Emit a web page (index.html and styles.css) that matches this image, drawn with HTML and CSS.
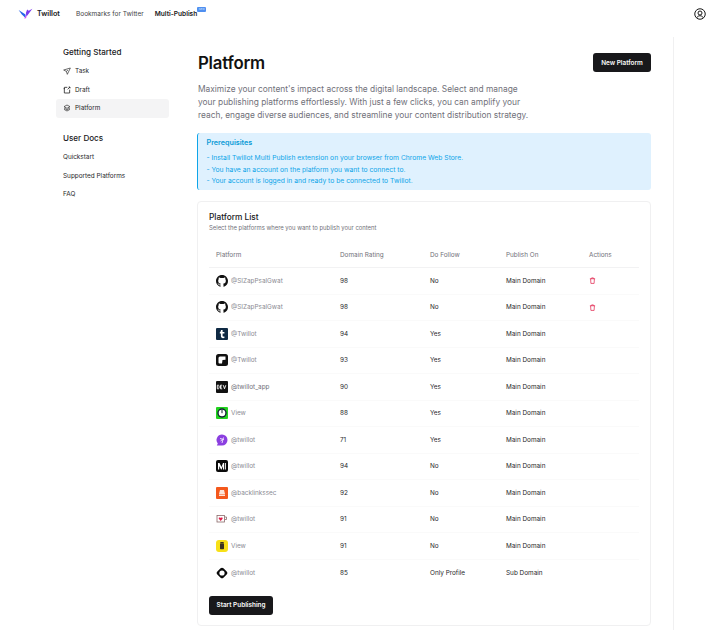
FILE: index.html
```html
<!DOCTYPE html>
<html lang="en">
<head>
<meta charset="utf-8">
<title>Platform</title>
<link rel="stylesheet" href="styles.css">
</head>
<body>
<header class="topbar">
  <div class="brand">
    <svg class="logo" viewBox="0 0 16 12" width="15" height="11"><path fill="#7c3aed" d="M9 9.500 15.500.8 11.500 3 9.800 1.600 8.400 5.400z"/><path fill="#2563eb" d="M8.600 11.500 8 7 .5 2.200 4 7.200z"/><path fill="#d946ef" d="M6.600 11.800 8.600 7.600 8.900 10.500z"/></svg>
    <span class="brand-name">Twillot</span>
  </div>
  <nav class="topnav">
    <a class="topnav-link">Bookmarks for Twitter</a>
    <a class="topnav-link topnav-current">Multi-Publish<span class="new-badge">NEW</span></a>
  </nav>
  <svg class="avatar" viewBox="0 0 24 24" width="12" height="12" fill="none" stroke="#1a1a1a" stroke-width="2"><circle cx="12" cy="12" r="10.500"/><circle cx="12" cy="10" r="4"/><path d="M5.500 19.500c1.500-3 3.800-4 6.500-4s5 1 6.500 4"/></svg>
</header>
<div class="layout">
  <aside class="sidebar">
    <h3 class="side-title">Getting Started</h3>
    <a class="side-link"><svg class="side-icon" viewBox="0 0 24 24" fill="none" stroke="#222" stroke-width="2"><path d="M22 3 2 9l8 4 3 9z"/><path d="m10 13 5-4"/></svg>Task</a>
    <a class="side-link"><svg class="side-icon" viewBox="0 0 24 24" fill="none" stroke="#222" stroke-width="2.400"><path d="M13 4H4v17h16v-10"/><path d="M2 8h4M17 3h4v4M21 3l-7 7"/></svg>Draft</a>
    <a class="side-link side-active"><svg class="side-icon" viewBox="0 0 24 24" fill="none" stroke="#222" stroke-width="2"><path d="m12 3 9 5-9 5-9-5z"/><path d="m3 12 9 5 9-5M3 16l9 5 9-5"/></svg>Platform</a>
    <h3 class="side-title side-title-docs">User Docs</h3>
    <a class="side-link">Quickstart</a>
    <a class="side-link">Supported Platforms</a>
    <a class="side-link">FAQ</a>
  </aside>
  <main class="main">
    <div class="page-head">
      <h1 class="page-title">Platform</h1>
      <button class="btn btn-new">New Platform</button>
    </div>
    <p class="intro">Maximize your content's impact across the digital landscape. Select and manage your publishing platforms effortlessly. With just a few clicks, you can amplify your reach, engage diverse audiences, and streamline your content distribution strategy.</p>
    <section class="notice">
      <h4 class="notice-title">Prerequisites</h4>
      <p class="notice-line">- Install Twillot Multi Publish extension on your browser from Chrome Web Store.</p>
      <p class="notice-line">- You have an account on the platform you want to connect to.</p>
      <p class="notice-line">- Your account is logged in and ready to be connected to Twillot.</p>
    </section>
    <section class="card">
      <h2 class="card-title">Platform List</h2>
      <p class="card-sub">Select the platforms where you want to publish your content</p>
      <table class="table">
        <thead>
          <tr><th class="col-platform">Platform</th><th class="col-rating">Domain Rating</th><th class="col-follow">Do Follow</th><th class="col-publish">Publish On</th><th>Actions</th></tr>
        </thead>
        <tbody>
          <tr>
            <td><span class="cell-platform"><svg class="pf" viewBox="0 0 16 16"><path fill="#111" d="M8 0C3.580 0 0 3.580 0 8c0 3.540 2.290 6.530 5.470 7.590.4.070.55-.17.55-.38 0-.19-.01-.82-.01-1.490-2.010.370-2.530-.49-2.690-.94-.09-.23-.48-.94-.82-1.130-.28-.15-.68-.52-.01-.53.630-.01 1.080.58 1.230.82.720 1.210 1.870.870 2.330.660.070-.52.280-.87.510-1.070-1.780-.2-3.640-.89-3.640-3.950 0-.87.310-1.590.820-2.150-.08-.2-.36-1.020.08-2.120 0 0 .67-.21 2.200.820.640-.18 1.320-.27 2-.27s1.360.09 2 .27c1.530-1.040 2.200-.82 2.200-.82.440 1.100.160 1.920.080 2.120.510.560.820 1.270.820 2.150 0 3.070-1.870 3.750-3.650 3.950.290.250.540.730.540 1.480 0 1.070-.01 1.930-.01 2.200 0 .210.150.460.550.380A8.010 8.010 0 0 0 16 8c0-4.420-3.580-8-8-8z"/></svg><span class="handle">@SIZapPsalGwat</span></span></td>
            <td>98</td><td>No</td><td>Main Domain</td>
            <td><svg class="trash" viewBox="0 0 24 24" fill="none" stroke="#e11d48" stroke-width="2.400"><path d="M3 6h18M9 6V3h6v3M5.500 6l1 16h11l1-16"/></svg></td>
          </tr>
          <tr>
            <td><span class="cell-platform"><svg class="pf" viewBox="0 0 16 16"><path fill="#111" d="M8 0C3.580 0 0 3.580 0 8c0 3.540 2.290 6.530 5.470 7.590.4.070.55-.17.55-.38 0-.19-.01-.82-.01-1.490-2.010.370-2.530-.49-2.690-.94-.09-.23-.48-.94-.82-1.130-.28-.15-.68-.52-.01-.53.630-.01 1.080.58 1.230.82.720 1.210 1.870.870 2.330.660.070-.52.280-.87.510-1.070-1.780-.2-3.640-.89-3.640-3.950 0-.87.310-1.590.820-2.150-.08-.2-.36-1.020.08-2.120 0 0 .67-.21 2.200.820.640-.18 1.320-.27 2-.27s1.360.09 2 .27c1.530-1.040 2.200-.82 2.200-.82.440 1.100.160 1.920.080 2.120.510.560.820 1.270.820 2.150 0 3.070-1.870 3.750-3.650 3.950.290.250.540.730.540 1.480 0 1.070-.01 1.930-.01 2.200 0 .210.150.460.550.380A8.010 8.010 0 0 0 16 8c0-4.420-3.580-8-8-8z"/></svg><span class="handle">@SIZapPsalGwat</span></span></td>
            <td>98</td><td>No</td><td>Main Domain</td>
            <td><svg class="trash" viewBox="0 0 24 24" fill="none" stroke="#e11d48" stroke-width="2.400"><path d="M3 6h18M9 6V3h6v3M5.500 6l1 16h11l1-16"/></svg></td>
          </tr>
          <tr>
            <td><span class="cell-platform"><svg class="pf" viewBox="0 0 12 12"><rect width="12" height="12" rx="1" fill="#0f2a44"/><path fill="#fff" d="M5 2h1.600v2H8.400v1.500H6.600v2.300c0 .6.400.8 1.800.6V10c-2.200.4-3.500-.1-3.500-1.900V5.500H3.800V4.300C4.500 4 4.900 3 5 2z"/></svg><span class="handle">@Twillot</span></span></td>
            <td>94</td><td>Yes</td><td>Main Domain</td><td></td>
          </tr>
          <tr>
            <td><span class="cell-platform"><svg class="pf" viewBox="0 0 12 12"><rect width="12" height="12" rx="2.500" fill="#111"/><path fill="#fff" d="M4 2.500h5.500v3.200L6.500 6 6 9.500H3.500a1 1 0 0 1-1-1V4A1.500 1.500 0 0 1 4 2.500z"/></svg><span class="handle">@Twillot</span></span></td>
            <td>93</td><td>Yes</td><td>Main Domain</td><td></td>
          </tr>
          <tr>
            <td><span class="cell-platform"><svg class="pf" viewBox="0 0 12 12"><rect width="12" height="12" rx="1" fill="#111"/><path fill="none" stroke="#fff" stroke-width=".9" d="M1.300 4.200v3.600h.8c.8 0 1-.4 1-1.800s-.2-1.800-1-1.800zM6.200 4.200H4.500v3.600h1.700M4.500 6h1.400M7.300 4.200l1.200 3.600 1.300-3.600"/></svg><span class="handle handle-dark">@twillot_app</span></span></td>
            <td>90</td><td>Yes</td><td>Main Domain</td><td></td>
          </tr>
          <tr>
            <td><span class="cell-platform"><svg class="pf" viewBox="0 0 12 12"><rect width="12" height="12" rx="1" fill="#22d31e"/><circle cx="6" cy="6" r="4.700" fill="#123"/><circle cx="6" cy="6" r="3.300" fill="#fff"/><path stroke="#123" stroke-width="1" d="M6 3v3.200"/></svg><span class="handle">View</span></span></td>
            <td>88</td><td>Yes</td><td>Main Domain</td><td></td>
          </tr>
          <tr>
            <td><span class="cell-platform"><svg class="pf" viewBox="0 0 12 12"><path fill="#8b3fe0" d="M6 .5a5.500 5.500 0 0 1 0 11H.8l1-2A5.500 5.500 0 0 1 6 .5z"/><path fill="none" stroke="#f3e8ff" stroke-width=".9" d="M4 4.500l4 1M7.500 3.500 6 9M4.500 7l2-1.500"/></svg><span class="handle">@twillot</span></span></td>
            <td>71</td><td>Yes</td><td>Main Domain</td><td></td>
          </tr>
          <tr>
            <td><span class="cell-platform"><svg class="pf" viewBox="0 0 12 12"><rect width="12" height="12" rx="2" fill="#0b0b0b"/><path fill="#fff" d="M2 3h1.500L5.500 7 7 3h1.200v6.400H7V6L5.600 9.400H5L3.200 6v3.400H2z"/><path fill="#ddd" d="M9 3h1v6.400H9z"/></svg><span class="handle">@twillot</span></span></td>
            <td>94</td><td>No</td><td>Main Domain</td><td></td>
          </tr>
          <tr>
            <td><span class="cell-platform"><svg class="pf" viewBox="0 0 12 12"><rect width="12" height="12" rx="1" fill="#f4581c"/><path fill="#fde4d8" d="M4 3h4l1 4H3zM3 7.500h6V9H3z"/></svg><span class="handle">@backlinkssec</span></span></td>
            <td>92</td><td>No</td><td>Main Domain</td><td></td>
          </tr>
          <tr>
            <td><span class="cell-platform"><svg class="pf" viewBox="0 0 12 12"><rect x="1" y="2.500" width="7.500" height="6.500" fill="#fff" stroke="#8a6a6a" stroke-width=".8"/><path fill="#e11d48" d="M4.700 8 2.800 5.700c-.5-.9.900-1.700 1.900-.7 1-1 2.400-.2 1.900.7z"/><path fill="none" stroke="#8a6a6a" stroke-width=".8" d="M8.800 4h1.700v2.500H8.800"/></svg><span class="handle">@twillot</span></span></td>
            <td>91</td><td>No</td><td>Main Domain</td><td></td>
          </tr>
          <tr>
            <td><span class="cell-platform"><svg class="pf" viewBox="0 0 12 12"><rect width="12" height="12" rx="3" fill="#f7e017"/><rect x="4" y="3.200" width="4" height="6" rx=".6" fill="#3a3320"/><rect x="4.300" y="2" width="3.400" height="1" fill="#3a3320"/></svg><span class="handle">View</span></span></td>
            <td>91</td><td>No</td><td>Main Domain</td><td></td>
          </tr>
          <tr>
            <td><span class="cell-platform"><svg class="pf" viewBox="0 0 12 12"><rect x="1.700" y="1.700" width="8.600" height="8.600" rx="2" transform="rotate(45 6 6)" fill="#0a0a0a"/><circle cx="6" cy="6" r="2.600" fill="#fff"/></svg><span class="handle">@twillot</span></span></td>
            <td>85</td><td>Only Profile</td><td>Sub Domain</td><td></td>
          </tr>
        </tbody>
      </table>
      <button class="btn btn-start">Start Publishing</button>
    </section>
  </main>
  <div class="right-rule"></div>
</div>
</body>
</html>
```
FILE: styles.css
```css
* { box-sizing: border-box; }
html, body { margin: 0; padding: 0; }
body {
  width: 716px;
  height: 630px;
  overflow: hidden;
  background: #fff;
  color: #1a1a1a;
  font-family: Inter, "Liberation Sans", sans-serif;
}
h1, h2, h3, h4, p { margin: 0; }

.topbar { height: 27px; display: flex; align-items: center; padding: 0 10px 0 18px; }
.brand { display: flex; align-items: center; gap: 4px; width: 58px; }
.logo { flex: none; }
.brand-name { font-size: 7.200px; font-weight: 600; color: #18181b; }
.topnav { display: flex; gap: 11px; flex: 1; align-items: center; }
.topnav-link { font-size: 6.500px; color: #3f3f46; }
.topnav-current { font-size: 6.600px; color: #18181b; font-weight: 600; position: relative; }
.new-badge {
  position: absolute; left: 100%; top: -3px;
  width: 9px; height: 5px; border-radius: 1px;
  background: #4f8ff0; color: #dbeafe; font-size: 2.500px; line-height: 5px; text-align: center; font-weight: 400;
}
.avatar { flex: none; }

.layout { display: flex; padding-left: 56px; height: 603px; }
.sidebar { width: 113px; flex: none; padding-top: 20px; }
.side-title { font-size: 8.100px; font-weight: 500; color: #18181b; line-height: 10px; padding-left: 7px; margin-bottom: 5px; }
.side-title-docs { margin-top: 15.500px; }
.side-link {
  display: flex; align-items: center; gap: 4px;
  height: 18.500px; padding-left: 7px; border-radius: 3px;
  font-size: 6.400px; color: #27272a;
}
.side-active { background: #f4f4f5; }
.side-icon { width: 8px; height: 8px; flex: none; }

.main { width: 454px; margin-left: 28px; flex: none; padding-top: 26px; }
.page-head { display: flex; justify-content: space-between; align-items: center; height: 19px; }
.page-title { font-size: 16.800px; font-weight: 600; line-height: 19px; color: #111; letter-spacing: -0.2px; padding: 1px 0 0 1px; }
.btn {
  background: #18181b; color: #fafafa; border: 0; border-radius: 3px;
  font-family: inherit; font-size: 6.400px; font-weight: 600; height: 19px; padding: 0;
}
.btn-new { width: 58px; }
.btn-start { width: 64px; margin-top: 10px; display: block; }
.intro { width: 336px; margin-top: 10.500px; padding-left: 1px; font-size: 8.400px; line-height: 13px; color: #71717a; }

.notice {
  margin-top: 11.500px; height: 57px; padding: 5px 8.500px;
  background: #dff1fe; border-left: 1.500px solid #0ea5e9; border-radius: 3px; color: #0ea5e9;
}
.notice-title { font-size: 7.200px; font-weight: 600; line-height: 10px; margin-bottom: 4px; color: #0c9bd6; }
.notice-line { font-size: 6.750px; line-height: 11.500px; }

.card {
  margin-top: 11px; height: 425px; padding: 10px 11px;
  border: 1px solid #f0f0f1; border-radius: 4px; background: #fff;
}
.card-title { font-size: 8.300px; font-weight: 500; line-height: 11px; color: #18181b; }
.card-sub { font-size: 5.900px; line-height: 9px; color: #71717a; margin-bottom: 10px; }

.table { width: 430px; border-collapse: collapse; table-layout: fixed; font-size: 6.400px; }
.table th { height: 25.500px; text-align: left; font-weight: 400; color: #71717a; border-bottom: 1px solid #f2f2f3; padding: 0 0 0 7px; }
.table td { height: 26.500px; padding: 0 0 0 7px; color: #27272a; border-bottom: 1px solid #fafafa; }
.table tbody tr:last-child td { border-bottom: 0; }
.col-platform { width: 124px; }
.col-rating { width: 90px; }
.col-follow { width: 76px; }
.col-publish { width: 83px; }
.cell-platform { display: flex; align-items: center; gap: 3px; }
.pf { width: 12px; height: 12px; flex: none; }
.handle { color: #8b8b93; }
.handle-dark { color: #71717a; }
.trash { width: 7px; height: 7px; display: block; }

.right-rule { width: 1px; margin-left: 22px; background: #f0f0f1; margin-top: 10px; flex: none; }
```
